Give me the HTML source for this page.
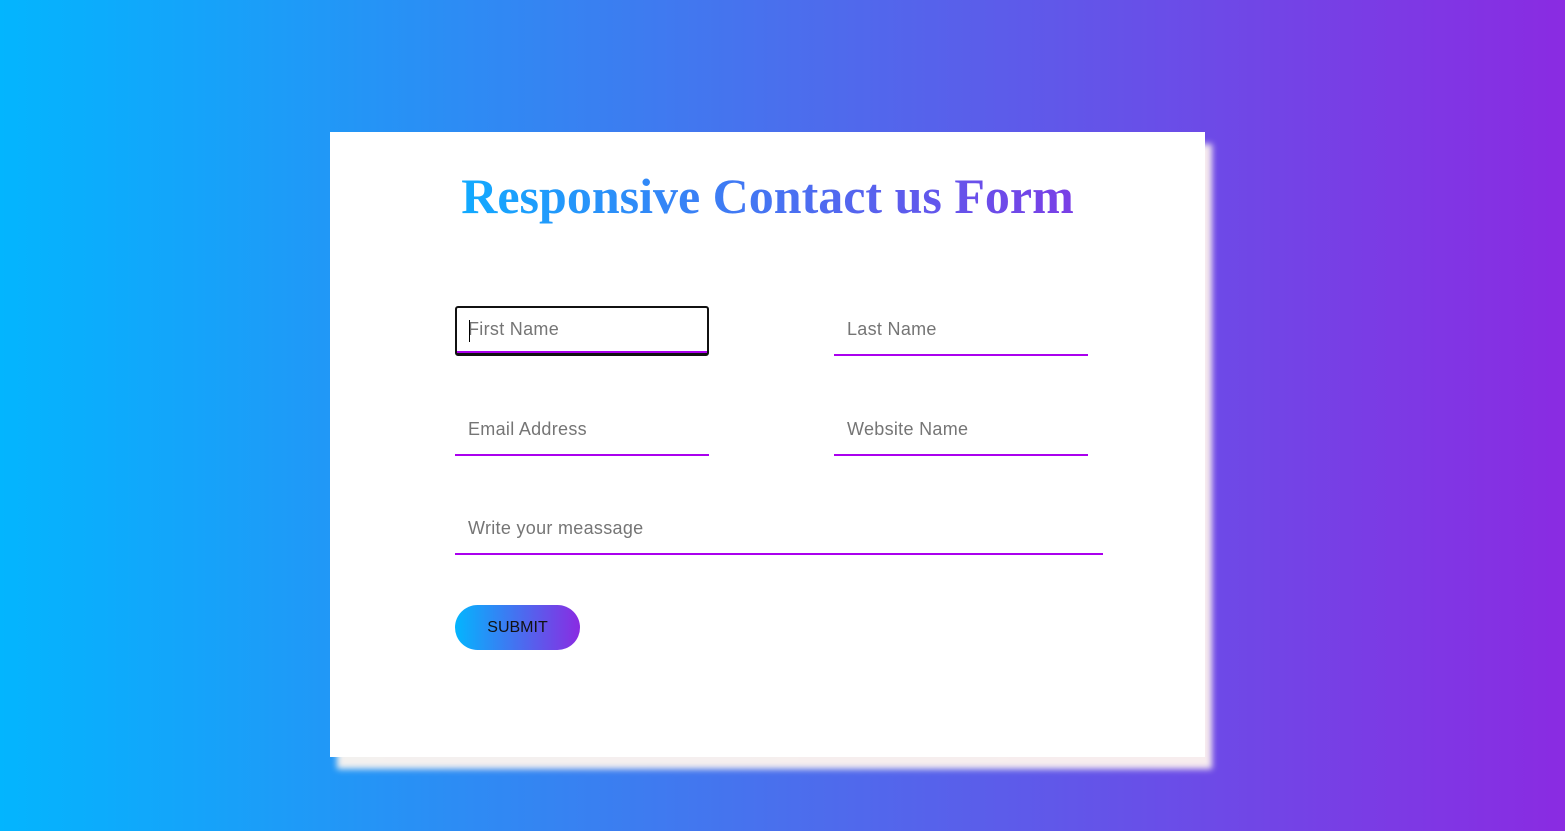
<!DOCTYPE html>
<html><head><style>
*{box-sizing:border-box;margin:0;padding:0}
html,body{width:1565px;height:831px;overflow:hidden}
body{background:linear-gradient(90deg,#03b5fe 0%,#4a6fed 50%,#8a2be2 100%);position:relative;font-family:"Liberation Sans",Arial,sans-serif}
.card{position:absolute;left:330px;top:132px;width:875px;height:625px;background:#fff;box-shadow:7px 12px 6px rgba(255,245,238,0.95)}
h1{position:absolute;left:330px;width:875px;top:164px;text-align:center;font-family:"Liberation Serif",serif;font-weight:bold;font-size:50px;line-height:64px}
h1 span{background:linear-gradient(90deg,#11aaff,#7a3ee6);-webkit-background-clip:text;background-clip:text;color:transparent}
.in{position:absolute;height:50px;border-bottom:2px solid #aa00ee;font-size:18px;letter-spacing:0.3px;color:#757575;padding-left:13px;line-height:46px}
.focus{border:2px solid #111;border-radius:3px;border-bottom:3px solid #111;box-shadow:inset 0 -2px 0 #aa00ee;padding-left:11px;line-height:42px}
.caret{position:absolute;left:12px;top:12px;width:1px;height:22px;background:#000}
.btn{position:absolute;left:455px;top:605px;width:125px;height:45px;border-radius:23px;background:linear-gradient(90deg,#03b5fe,#8a2be2);color:#111;font-size:16px;text-align:center;line-height:45px}
</style></head><body>
<div class="card"></div>
<h1><span>Responsive Contact us Form</span></h1>
<div class="in focus" style="left:455px;top:306px;width:254px;height:50px"><div class="caret"></div>First Name</div>
<div class="in" style="left:834px;top:306px;width:254px">Last Name</div>
<div class="in" style="left:455px;top:406px;width:254px">Email Address</div>
<div class="in" style="left:834px;top:406px;width:254px">Website Name</div>
<div class="in" style="left:455px;top:505px;width:648px">Write your meassage</div>
<div class="btn">SUBMIT</div>
</body></html>
